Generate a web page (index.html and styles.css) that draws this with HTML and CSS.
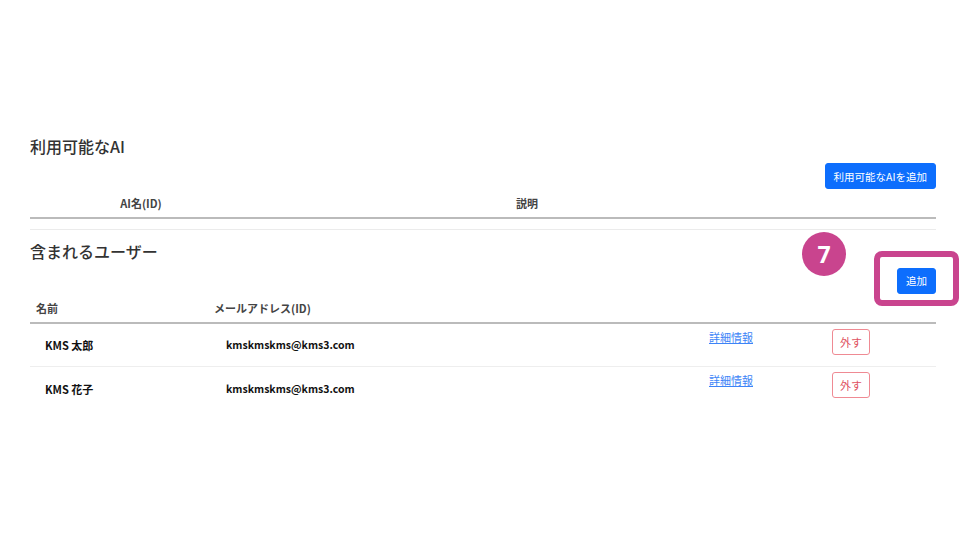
FILE: index.html
```html
<!DOCTYPE html>
<html lang="ja">
<head>
  <meta charset="UTF-8">
  <title>利用可能なAI</title>
  <link rel="stylesheet" href="styles.css">
</head>
<body>

  <div class="page">

    <section class="block">
      <h3 class="block-title">利用可能なAI</h3>
      <div class="toolbar">
        <button class="btn btn-primary">利用可能なAIを追加</button>
      </div>
      <table class="list ai-list">
        <thead>
          <tr>
            <th class="col-ai">AI名(ID)</th>
            <th class="col-desc">説明</th>
            <th></th>
          </tr>
        </thead>
        <tbody></tbody>
      </table>
    </section>

    <section class="block block-users">
      <h3 class="block-title">含まれるユーザー</h3>
      <div class="toolbar">
        <span class="callout">
          <span class="callout-num">7</span>
          <span class="callout-box"></span>
          <button class="btn btn-primary">追加</button>
        </span>
      </div>
      <table class="list user-list">
        <thead>
          <tr>
            <th class="col-name">名前</th>
            <th class="col-mail">メールアドレス(ID)</th>
            <th class="col-link"></th>
            <th></th>
          </tr>
        </thead>
        <tbody>
          <tr>
            <td class="cell-name">KMS 太郎</td>
            <td class="cell-mail">kmskmskms@kms3.com</td>
            <td class="cell-link"><a href="#">詳細情報</a></td>
            <td class="cell-action"><button class="btn btn-remove">外す</button></td>
          </tr>
          <tr>
            <td class="cell-name">KMS 花子</td>
            <td class="cell-mail">kmskmskms@kms3.com</td>
            <td class="cell-link"><a href="#">詳細情報</a></td>
            <td class="cell-action"><button class="btn btn-remove">外す</button></td>
          </tr>
        </tbody>
      </table>
    </section>

  </div>

</body>
</html>
```

FILE: styles.css
```css
body {
  margin: 0;
  background: #fff;
  color: #333;
  font-family: "Noto Sans CJK JP", "Noto Sans", sans-serif;
}

.page {
  width: 906px;
  padding: 135px 24px 0 30px;
}

.block-title {
  margin: 0;
  font-size: 16px;
  line-height: 22px;
  font-weight: 500;
  color: #333;
}

.toolbar {
  margin-top: 6px;
  display: flex;
  justify-content: flex-end;
}

.block-users .toolbar {
  margin-top: 4px;
}

.btn {
  font-family: inherit;
  cursor: pointer;
  border-radius: 3px;
}

.btn-primary {
  height: 26px;
  padding: 0 8px;
  border: 1px solid #0d6efd;
  background: #0d6efd;
  color: #fff;
  font-size: 10.5px;
}

.list {
  width: 100%;
  border-collapse: collapse;
  table-layout: fixed;
}

.list th {
  padding: 6px;
  font-size: 11px;
  line-height: 16px;
  font-weight: 600;
  color: #444;
  border-bottom: 2px solid #bbb;
}

.ai-list .col-ai {
  width: 210px;
  text-align: center;
}

.ai-list .col-desc {
  width: 538px;
  text-align: center;
}

.block-users {
  margin-top: 10px;
  padding-top: 10px;
  border-top: 1px solid #ebebeb;
}

.user-list th {
  text-align: left;
}

.user-list .col-name {
  width: 166px;
}

.user-list .col-mail {
  width: 470px;
}

.user-list .col-link {
  width: 110px;
}

.user-list td {
  height: 44px;
  padding: 0;
  box-sizing: border-box;
  font-size: 11px;
  line-height: 16px;
  border-bottom: 1px solid #eee;
}

.user-list tbody tr:last-child td {
  border-bottom: none;
}

.cell-name {
  padding-left: 15px !important;
  font-weight: 700;
  color: #111;
}

.cell-mail {
  padding-left: 18px !important;
  font-size: 10.5px !important;
  font-weight: 700;
  color: #111;
}

.cell-link,
.cell-action {
  vertical-align: top;
}

.cell-link {
  padding: 5px 0 0 19px !important;
}

.cell-link a {
  color: #3d84f7;
  text-decoration: underline;
}

.cell-action {
  padding: 5px 0 0 20px !important;
}

.btn-remove {
  height: 26px;
  width: 38px;
  padding: 0;
  border: 1px solid #ef8a93;
  background: #fff;
  color: #e0525f;
  font-size: 11px;
}

/* annotation over the add button */
.callout {
  position: relative;
  display: inline-block;
}

.callout-box {
  position: absolute;
  left: -23px;
  top: -15px;
  width: 85px;
  height: 55px;
  box-sizing: border-box;
  border: 6px solid #c9448e;
  border-radius: 8px;
}

.callout-num {
  position: absolute;
  left: -95px;
  top: -34px;
  width: 44px;
  height: 44px;
  border-radius: 50%;
  background: #c9448e;
  color: #fff;
  font-family: "Open Sans", "Noto Sans", sans-serif;
  font-size: 23px;
  font-weight: 700;
  line-height: 44px;
  text-align: center;
}
```
